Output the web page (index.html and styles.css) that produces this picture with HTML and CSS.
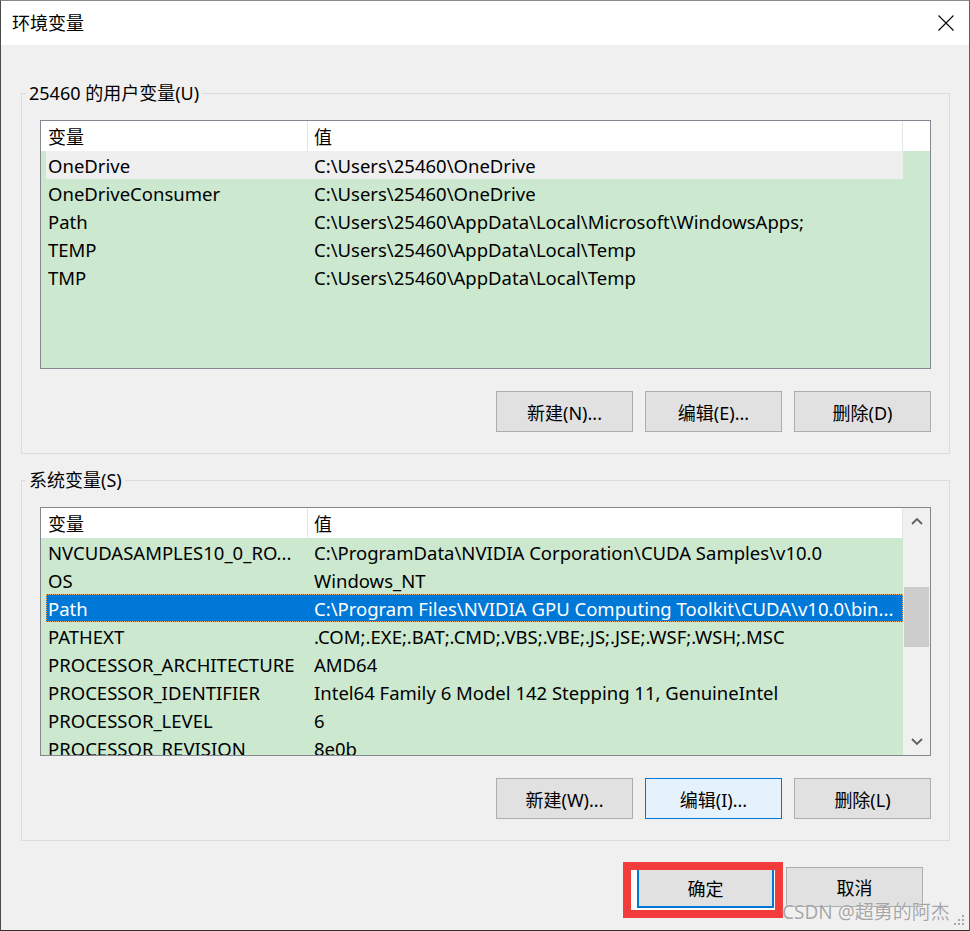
FILE: index.html
```html
<!DOCTYPE html>
<html lang="zh-CN">
<head>
    <meta charset="UTF-8">
    <meta name="viewport" content="width=device-width, initial-scale=1.0">
    <title>环境变量</title>
    <link rel="stylesheet" href="styles.css">
</head>
<body>
    <div class="dialog">
        <div class="titleBar">
            <span class="titleText">环境变量</span>
            <button class="closeBtn" aria-label="关闭">
                <svg width="16" height="16" viewBox="0 0 16 16"><path d="M0.5 0.5L15.5 15.5M15.5 0.5L0.5 15.5" stroke="#000" stroke-width="1.1" fill="none"/></svg>
            </button>
        </div>

        <div class="client">
            <fieldset class="group userGroup">
                <legend>25460 的用户变量(U)</legend>
                <div class="listView">
                    <div class="listMain">
                        <div class="listHead">
                            <div class="headCell colName">变量</div>
                            <div class="headCell colValue">值</div>
                        </div>
                        <div class="listBody">
                            <div class="row hot"><span class="colName">OneDrive</span><span class="colValue">C:\Users\25460\OneDrive</span></div>
                            <div class="row"><span class="colName">OneDriveConsumer</span><span class="colValue">C:\Users\25460\OneDrive</span></div>
                            <div class="row"><span class="colName">Path</span><span class="colValue">C:\Users\25460\AppData\Local\Microsoft\WindowsApps;</span></div>
                            <div class="row"><span class="colName">TEMP</span><span class="colValue">C:\Users\25460\AppData\Local\Temp</span></div>
                            <div class="row"><span class="colName">TMP</span><span class="colValue">C:\Users\25460\AppData\Local\Temp</span></div>
                        </div>
                    </div>
                    <div class="listSide">
                        <div class="headFill"></div>
                    </div>
                </div>
                <div class="btnRow">
                    <button class="btn">新建(N)...</button>
                    <button class="btn">编辑(E)...</button>
                    <button class="btn">删除(D)</button>
                </div>
            </fieldset>

            <fieldset class="group sysGroup">
                <legend>系统变量(S)</legend>
                <div class="listView">
                    <div class="listMain">
                        <div class="listHead">
                            <div class="headCell colName">变量</div>
                            <div class="headCell colValue">值</div>
                        </div>
                        <div class="listBody">
                            <div class="row"><span class="colName">NVCUDASAMPLES10_0_RO...</span><span class="colValue">C:\ProgramData\NVIDIA Corporation\CUDA Samples\v10.0</span></div>
                            <div class="row"><span class="colName">OS</span><span class="colValue">Windows_NT</span></div>
                            <div class="row selected"><span class="colName">Path</span><span class="colValue">C:\Program Files\NVIDIA GPU Computing Toolkit\CUDA\v10.0\bin...</span></div>
                            <div class="row"><span class="colName">PATHEXT</span><span class="colValue">.COM;.EXE;.BAT;.CMD;.VBS;.VBE;.JS;.JSE;.WSF;.WSH;.MSC</span></div>
                            <div class="row"><span class="colName">PROCESSOR_ARCHITECTURE</span><span class="colValue">AMD64</span></div>
                            <div class="row"><span class="colName">PROCESSOR_IDENTIFIER</span><span class="colValue">Intel64 Family 6 Model 142 Stepping 11, GenuineIntel</span></div>
                            <div class="row"><span class="colName">PROCESSOR_LEVEL</span><span class="colValue">6</span></div>
                            <div class="row"><span class="colName">PROCESSOR_REVISION</span><span class="colValue">8e0b</span></div>
                        </div>
                    </div>
                    <div class="vScroll">
                        <div class="scrollArrow">
                            <svg width="12" height="8" viewBox="0 0 12 8"><polyline points="1,7 6,2 11,7" stroke="#606060" stroke-width="1.8" fill="none"/></svg>
                        </div>
                        <div class="scrollTrack"><div class="scrollThumb"></div></div>
                        <div class="scrollArrow">
                            <svg width="12" height="8" viewBox="0 0 12 8"><polyline points="1,1 6,6 11,1" stroke="#606060" stroke-width="1.8" fill="none"/></svg>
                        </div>
                    </div>
                </div>
                <div class="btnRow">
                    <button class="btn">新建(W)...</button>
                    <button class="btn hover">编辑(I)...</button>
                    <button class="btn">删除(L)</button>
                </div>
            </fieldset>

            <div class="footer">
                <span class="markBox"><button class="btn okBtn">确定</button></span>
                <button class="btn cancelBtn">取消</button>
            </div>
        </div>

        <div class="watermark">CSDN @超勇的阿杰</div>
        <svg class="grip" width="12" height="12" viewBox="0 0 12 12">
            <rect x="8" y="0" width="2" height="2" fill="#a8a8a8"/>
            <rect x="4" y="4" width="2" height="2" fill="#a8a8a8"/>
            <rect x="8" y="4" width="2" height="2" fill="#a8a8a8"/>
            <rect x="0" y="8" width="2" height="2" fill="#a8a8a8"/>
            <rect x="4" y="8" width="2" height="2" fill="#a8a8a8"/>
            <rect x="8" y="8" width="2" height="2" fill="#a8a8a8"/>
        </svg>
    </div>
</body>
</html>
```

FILE: styles.css
```css
*{margin:0;padding:0;box-sizing:border-box;}
html,body{
    width:970px;
    height:931px;
    overflow:hidden;
    background:#f0f0f0;
}
body{
    font-family:"Noto Sans","Noto Sans CJK SC",sans-serif;
    font-size:18px;
    color:#000;
}

/* window frame */
.dialog{
    position:relative;
    width:970px; height:931px;
    display:flex;
    flex-direction:column;
    background:#f0f0f0;
    border-top:1px solid #8a8a8a;
    border-left:1px solid #4b4b4b;
    border-right:1px solid #5f5f5f;
    border-bottom:1px solid #2f2f2f;
}

.titleBar{
    height:44px;
    flex:none;
    background:#fff;
    display:flex;
    align-items:center;
    justify-content:space-between;
    padding:0 15px 0 11px;
}
.titleText{line-height:24px;}
.closeBtn{
    border:none;
    background:none;
    width:16px; height:16px;
    display:flex;
}

.client{
    display:flex;
    flex-direction:column;
    padding:0 19px 0 20px;
}

/* group boxes */
.group{
    border:1px solid #dcdcdc;
    padding:0 18px 21px;
    min-width:0;
}
.group legend{
    margin-left:-14px;
    padding:0 3px;
    line-height:24px;
}
.userGroup{margin-top:36px;}
.sysGroup{margin-top:14px;}

/* list view */
.listView{
    margin-top:15px;
    height:249px;
    display:flex;
    border:1px solid #828790;
    background:#cce8cf;
    overflow:hidden;
}
.listMain{
    width:862px;
    flex:none;
}
.listHead{
    display:flex;
    height:30px;
    background:#fff;
}
.headCell{
    height:30px;
    line-height:33px;
    overflow:hidden;
    border-right:1px solid #e5e5e5;
}
.listHead .colName{width:267px;padding-left:7px;}
.listHead .colValue{width:595px;padding-left:6px;}

.listBody{padding-left:5px;}
.row{
    display:flex;
    height:28px;
    font-size:18.5px;
    white-space:nowrap;
}
.row span{
    height:28px;
    line-height:30px;
    overflow:hidden;
}
.row .colName{width:262px;padding-left:2px;}
.row .colValue{width:595px;padding-left:6px;}
.row.hot{background:#efefef;}
.row.selected{
    background:#0078d7;
    color:#fff;
    outline:1px dotted #e9a561;
    outline-offset:-1px;
}

.listSide{flex:1;}
.headFill{height:30px;background:#fff;}

/* vertical scrollbar */
.vScroll{
    flex:1;
    display:flex;
    flex-direction:column;
    background:#f0f0f0;
    padding:0 1px;
}
.scrollArrow{
    height:26px;
    flex:none;
    display:flex;
    align-items:center;
    justify-content:center;
}
.scrollTrack{flex:1;}
.scrollThumb{
    margin-top:53px;
    height:60px;
    background:#cdcdcd;
}

/* push buttons */
.btnRow{
    display:flex;
    justify-content:flex-end;
    gap:12px;
    margin-top:22px;
}
.btn{
    width:137px;
    height:41px;
    font:inherit;
    color:#000;
    background:#e1e1e1;
    border:1px solid #adadad;
}
.btn.hover{
    background:#e5f1fb;
    border-color:#0078d7;
}

.footer{
    display:flex;
    justify-content:flex-end;
    align-items:flex-start;
    margin-top:21px;
    padding-right:27px;
}
.markBox{
    display:flex;
    border:8px solid #f33b3b;
    background:#fff;
    padding:0 1px 2px 6px;
}
.okBtn{
    height:38px;
    border:2px solid #0078d7;
    border-top:none;
}
.cancelBtn{
    height:40px;
    margin-top:5px;
    margin-left:3px;
}

.watermark{
    position:absolute;
    left:781px;
    top:899px;
    font-size:19px;
    line-height:24px;
    color:rgba(150,150,150,0.85);
    text-shadow:0 0 1px #fff;
    white-space:nowrap;
}
.grip{
    position:absolute;
    right:3px;
    bottom:3px;
}
```
